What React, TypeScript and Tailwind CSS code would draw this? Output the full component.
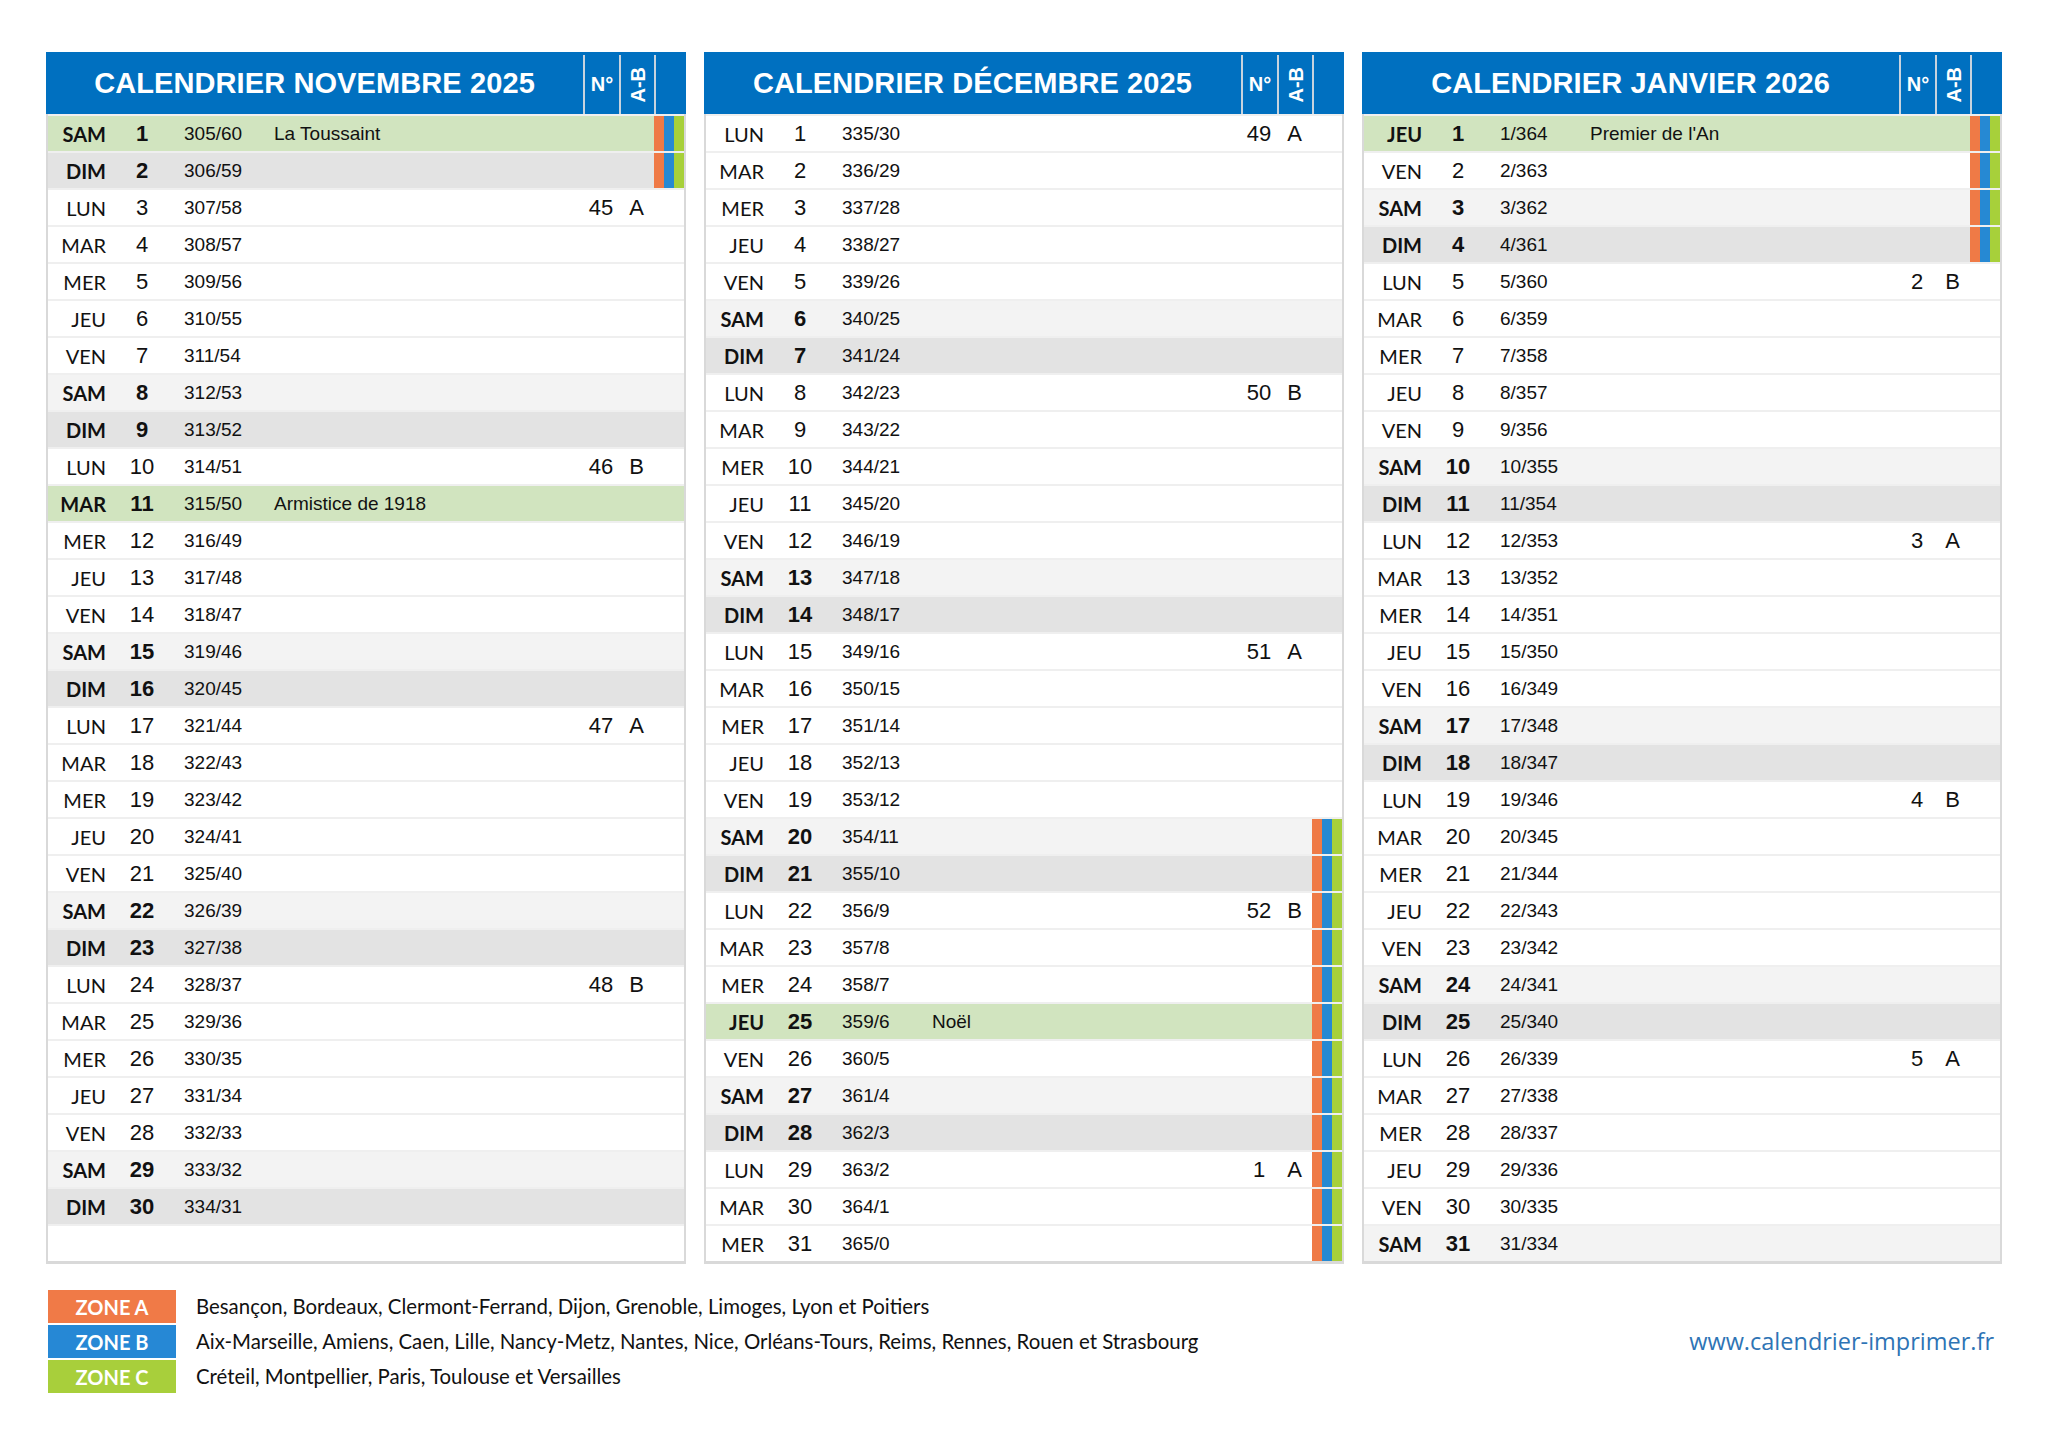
import React from 'react'

type Month = {
  title: string
  days: number
  firstDow: number // 0 = LUN
  firstYday: number
  yearLen: number
  holidays: Record<number, string>
  weeks: Record<number, [number, string]>
  stripes: number[]
}

const DOW = ['LUN', 'MAR', 'MER', 'JEU', 'VEN', 'SAM', 'DIM']

const range = (a: number, b: number) => Array.from({ length: b - a + 1 }, (_, i) => a + i)

const MONTHS: Month[] = [
  {
    title: 'CALENDRIER NOVEMBRE 2025',
    days: 30,
    firstDow: 5,
    firstYday: 305,
    yearLen: 365,
    holidays: { 1: 'La Toussaint', 11: 'Armistice de 1918' },
    weeks: { 3: [45, 'A'], 10: [46, 'B'], 17: [47, 'A'], 24: [48, 'B'] },
    stripes: [1, 2],
  },
  {
    title: 'CALENDRIER DÉCEMBRE 2025',
    days: 31,
    firstDow: 0,
    firstYday: 335,
    yearLen: 365,
    holidays: { 25: 'Noël' },
    weeks: { 1: [49, 'A'], 8: [50, 'B'], 15: [51, 'A'], 22: [52, 'B'], 29: [1, 'A'] },
    stripes: range(20, 31),
  },
  {
    title: 'CALENDRIER JANVIER 2026',
    days: 31,
    firstDow: 3,
    firstYday: 1,
    yearLen: 365,
    holidays: { 1: "Premier de l'An" },
    weeks: { 5: [2, 'B'], 12: [3, 'A'], 19: [4, 'B'], 26: [5, 'A'] },
    stripes: range(1, 4),
  },
]

const ZONES = [
  { name: 'ZONE A', bg: 'bg-[#f07a47]', cities: 'Besançon, Bordeaux, Clermont-Ferrand, Dijon, Grenoble, Limoges, Lyon et Poitiers' },
  { name: 'ZONE B', bg: 'bg-[#2688d5]', cities: 'Aix-Marseille, Amiens, Caen, Lille, Nancy-Metz, Nantes, Nice, Orléans-Tours, Reims, Rennes, Rouen et Strasbourg' },
  { name: 'ZONE C', bg: 'bg-[#a8cf3b]', cities: 'Créteil, Montpellier, Paris, Toulouse et Versailles' },
]

const calibri = "font-['Lato','Open_Sans',sans-serif]"
const arial = "font-['Liberation_Sans',Arial,sans-serif]"

function DayRow({ m, d }: { m: Month; d: number }) {
  const dow = (m.firstDow + d - 1) % 7
  const holiday = m.holidays[d]
  const weekend = dow >= 5
  const bold = weekend || !!holiday
  const yday = m.firstYday + d - 1
  const week = m.weeks[d]
  const bg = holiday ? 'bg-[#d1e4bf]' : dow === 6 ? 'bg-[#e3e3e3]' : dow === 5 ? 'bg-[#f3f3f3]' : 'bg-white'

  return (
    <div className="h-[37px] border-t-2 border-[#efefef] bg-white">
      <div className={`flex h-[35px] items-center text-[#111] ${bg}`}>
        <div className={`w-[58px] text-right text-[20px] ${calibri} ${bold ? 'font-bold' : ''}`}>{DOW[dow]}</div>
        <div className={`w-[72px] text-center text-[22px] ${arial} ${bold ? 'font-bold' : ''}`}>{d}</div>
        <div className={`w-[96px] pl-[6px] pt-[1px] text-[19px] ${arial}`}>{yday}/{m.yearLen - yday}</div>
        <div className={`flex-1 pt-[1px] text-[19px] ${arial}`}>{holiday}</div>
        <div className={`w-[36px] text-center text-[22px] ${arial}`}>{week?.[0]}</div>
        <div className={`w-[35px] text-center text-[22px] ${arial}`}>{week?.[1]}</div>
        <div className="flex h-full w-[30px]">
          {m.stripes.includes(d) && (
            <>
              <div className="w-[10px] bg-[#ef7a46]" />
              <div className="w-[10px] bg-[#2689d3]" />
              <div className="w-[10px] bg-[#a7d03a]" />
            </>
          )}
        </div>
      </div>
    </div>
  )
}

function MonthPanel({ m }: { m: Month }) {
  return (
    <div className="w-[640px]">
      <div className={`flex h-[62px] bg-[#0070c0] text-white font-bold ${arial}`}>
        <div className="flex w-[537px] items-center justify-center pt-[1px] text-[29px] tracking-[0.1px]">{m.title}</div>
        <div className="mt-[3px] flex w-[36px] items-center justify-center border-l-2 border-[#c8d3de] text-[20px] pb-[2px]">N°</div>
        <div className="mt-[3px] flex w-[35px] items-center justify-center border-l-2 border-[#c8d3de]">
          <span className="text-[20px] leading-none [writing-mode:vertical-rl] rotate-180">A-B</span>
        </div>
        <div className="mt-[3px] w-[32px] border-l-2 border-[#c8d3de]" />
      </div>
      <div className="border-x-2 border-b-[3px] border-[#d9d9d9]">
        {range(1, m.days).map((d) => <DayRow key={d} m={m} d={d} />)}
        {m.days < 31 && <div className="h-[37px] border-t-2 border-[#efefef] bg-white" />}
      </div>
    </div>
  )
}

export default function App() {
  return (
    <div className="h-[1448px] w-[2048px] bg-white pt-[52px] pl-[46px]">
      <div className="flex gap-[18px]">
        {MONTHS.map((m) => <MonthPanel key={m.title} m={m} />)}
      </div>
      <div className="mt-[26px] ml-[2px] flex items-center pr-[54px]">
        <div className="flex flex-col gap-[2px]">
          {ZONES.map((z) => (
            <div key={z.name} className="flex h-[33px] items-center">
              <div className={`flex h-full w-[128px] items-center justify-center text-[20px] font-bold text-white ${calibri} ${z.bg}`}>{z.name}</div>
              <div className={`pl-[20px] text-[20.4px] text-[#111] ${calibri}`}>{z.cities}</div>
            </div>
          ))}
        </div>
        <div className={`ml-auto text-[23.5px] text-[#2e74b5] font-['Open_Sans',sans-serif]`}>www.calendrier-imprimer.fr</div>
      </div>
    </div>
  )
}
